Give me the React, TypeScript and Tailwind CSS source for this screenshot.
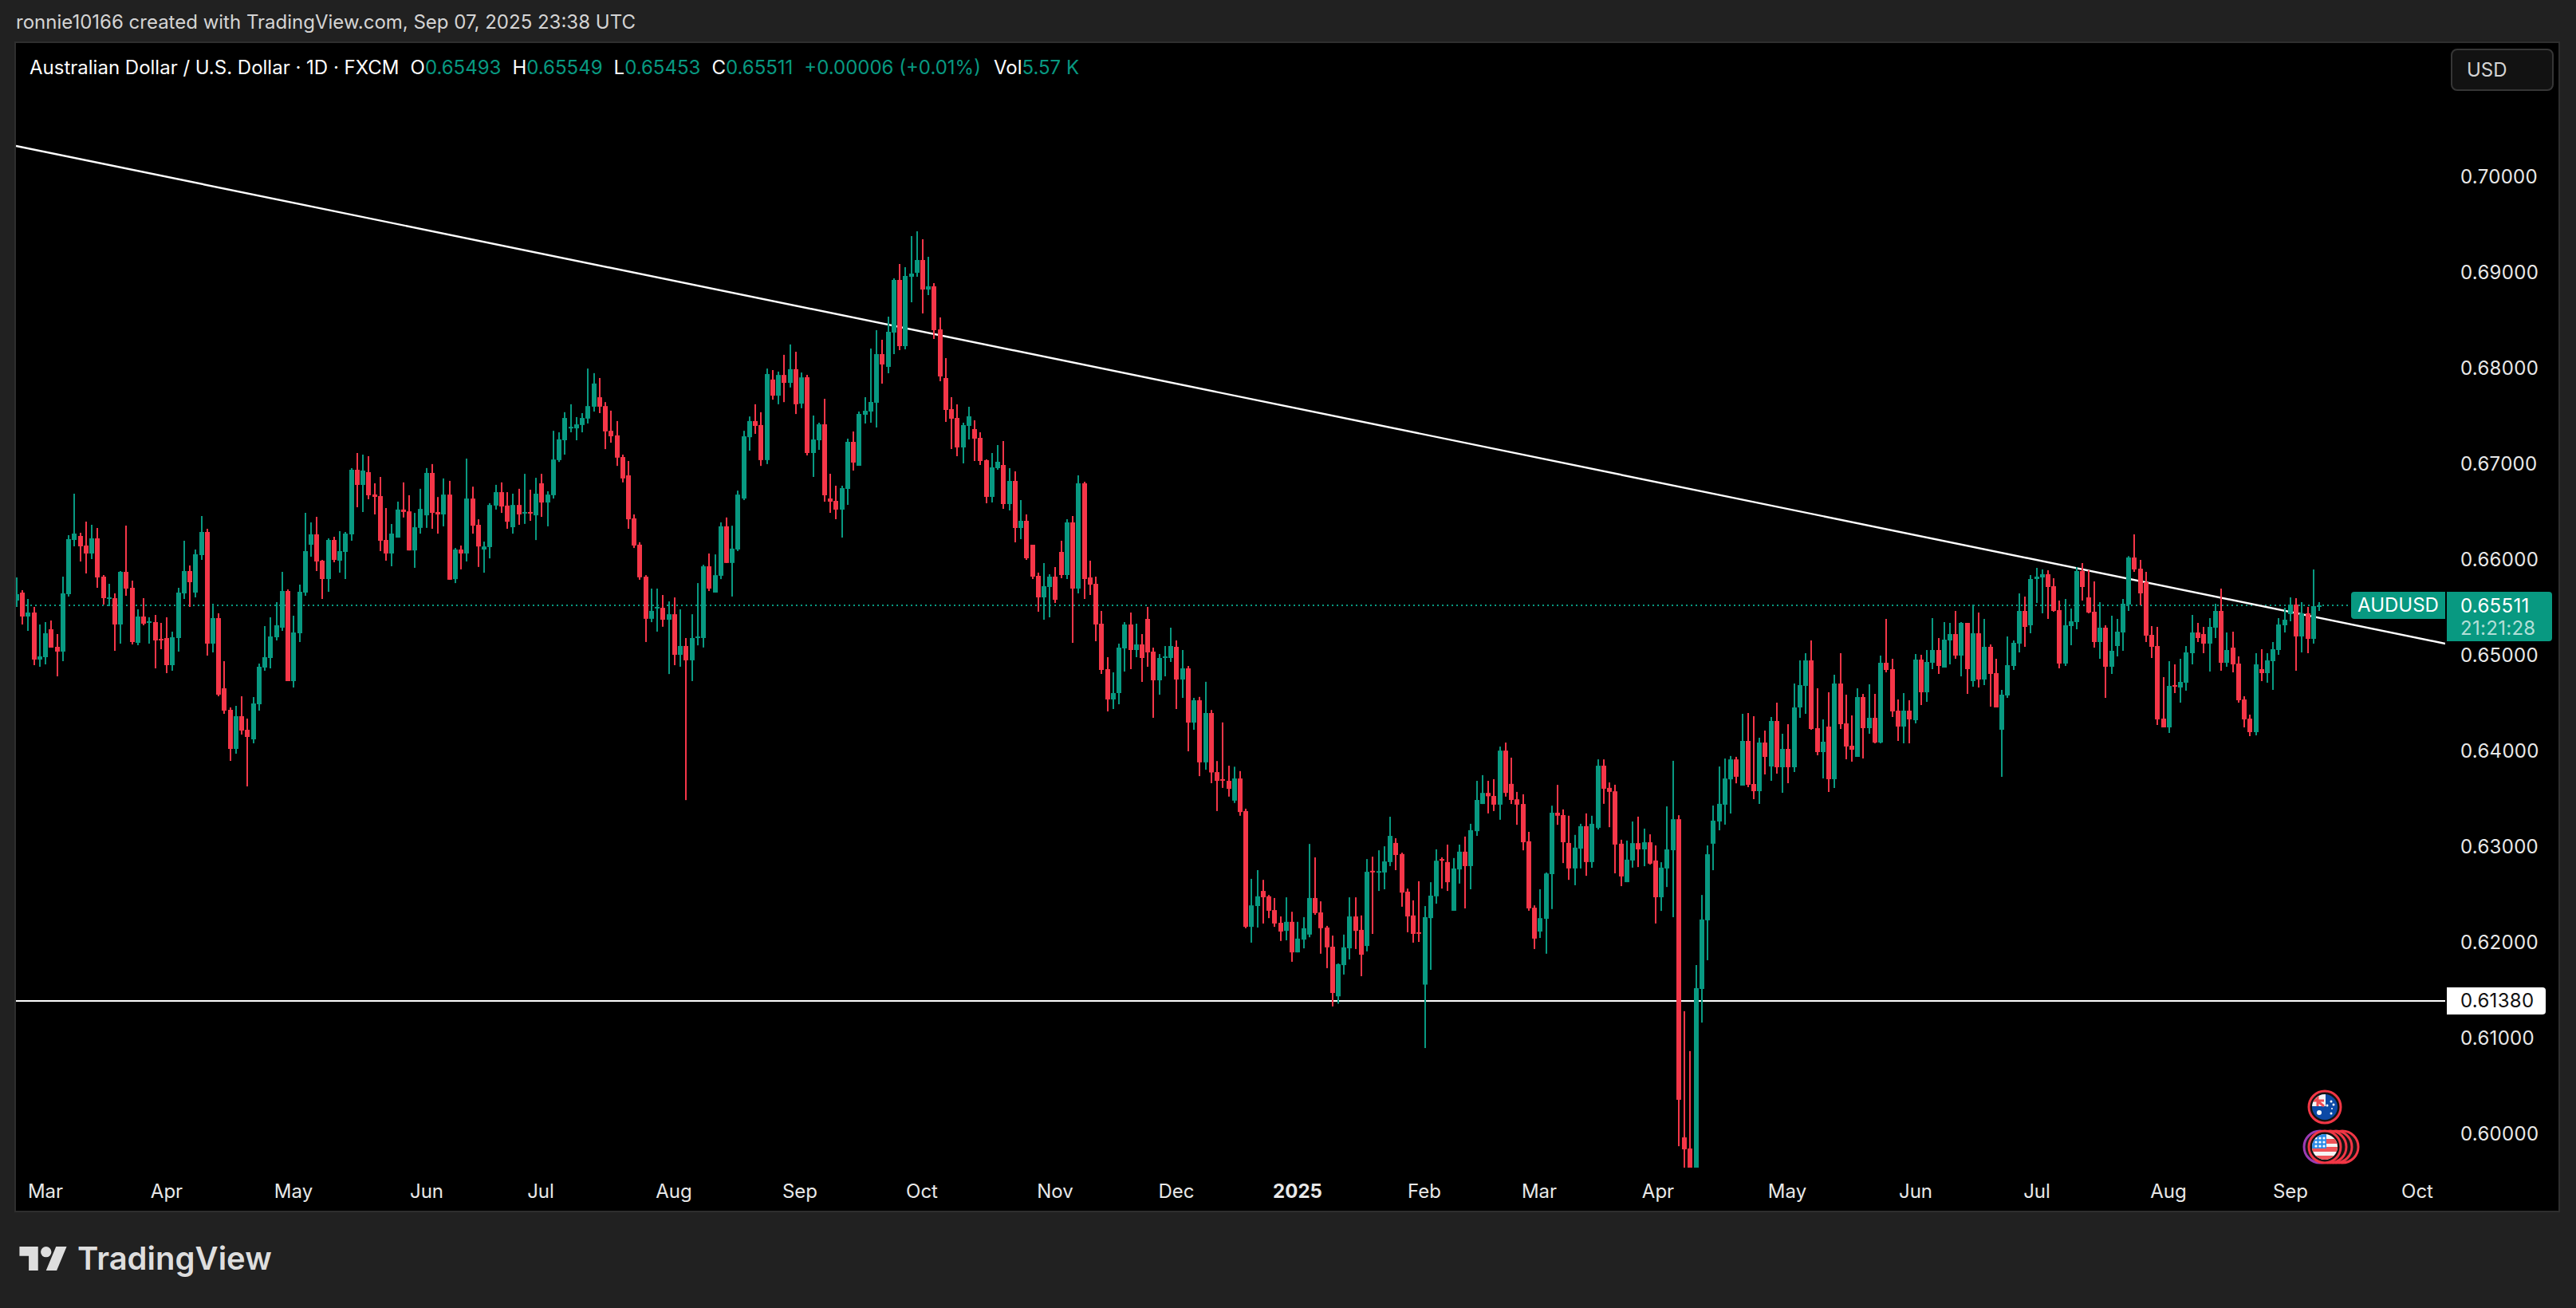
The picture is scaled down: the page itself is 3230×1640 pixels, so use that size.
const G = "#089981";
const R = "#f53648";

type C = [number, string, number, number, number, number];
type Seg = { ox: number; oy: number; sx: number; sy: number; c: C[] };

const segs: Seg[] = [
  { ox: 0, oy: 580, sx: 3, sy: 3, c: [
    [63,"g",432,495,519,543],[84,"r",480,489,579,609],[105,"g",513,564,579,633],[129,"r",543,564,741,762],[150,"g",609,729,741,768],[171,"g",600,642,732,759],[192,"r",594,627,696,696],[216,"r",645,693,711,804],[237,"g",429,492,711,747],[258,"g",273,288,495,504],[279,"g",117,267,291,315],[303,"r",264,276,315,372],[324,"r",222,312,342,417],[345,"g",234,285,342,363],[366,"r",246,285,432,471],[390,"r",423,429,510,534],[411,"g",456,507,513,540],[432,"r",492,510,609,708],[453,"g",408,411,609,681],[474,"r",237,411,474,501],[498,"r",444,471,675,684],[519,"g",552,579,678,687],[540,"r",510,579,606,612],[561,"g",582,597,603,681],[585,"r",573,600,669,774],[606,"r",603,663,669,702],[627,"r",582,660,762,792],[648,"g",636,657,762,783],[672,"g",471,489,660,711],[693,"g",294,408,492,513],[714,"r",387,408,450,543],[735,"g",327,345,489,507],[759,"g",201,261,348,366],[780,"r",249,261,681,726],[801,"g",531,585,681,714],[822,"r",567,585,873,879],[843,"r",747,849,933,945],[867,"r",921,930,1077,1122],[888,"g",915,954,1077,1095],[909,"r",879,954,1008,1023],[930,"r",963,1005,1032,1218],[954,"g",882,906,1041,1056],[975,"g",756,768,909,933],[996,"g",615,732,771,783],[1017,"g",582,654,735,774],[1041,"g",525,612,657,669],[1062,"g",411,483,621,633],[1083,"r",477,483,822,822],[1104,"g",576,639,822,846],[1128,"g",459,486,642,675],[1149,"g",189,333,489,501],[1170,"g",225,270,309,354],[1191,"r",204,270,372,408],[1212,"r",366,369,438,513],[1236,"g",285,291,438,486],[1257,"r",279,291,366,375],[1278,"g",258,333,369,414],[1299,"g",261,267,336,438],[1323,"g",21,27,270,294],[1344,"r",-36,27,84,168],[1365,"g",-30,30,84,186],[1386,"r",-24,36,123,138],[1410,"r",78,120,129,195],[1431,"r",54,126,294,333],[1452,"r",171,291,342,369],[1473,"g",231,267,342,390],
  ]},
  { ox: 490, oy: 420, sx: 3, sy: 2.6133, c: [
    [27,"g",546,572,664,664],[48,"r",483,572,580,598],[69,"r",525,578,706,706],[90,"g",583,630,706,763],[111,"g",504,570,632,651],[135,"g",436,452,591,632],[156,"r",423,452,583,635],[177,"r",531,580,588,651],[198,"g",470,523,588,627],[222,"r",478,523,802,802],[243,"g",698,703,800,813],[264,"r",690,703,716,768],[285,"g",405,536,716,742],[309,"r",497,536,625,651],[330,"r",604,622,693,760],[351,"g",677,693,703,779],[372,"g",551,557,695,732],[396,"g",491,515,559,572],[417,"r",483,515,562,583],[438,"r",515,559,612,635],[459,"g",520,557,630,651],[483,"r",504,557,588,622],[504,"g",455,580,584,619],[525,"r",507,580,584,609],[546,"g",468,520,591,672],[567,"r",455,486,549,596],[591,"g",512,523,549,627],[612,"g",314,408,525,536],[633,"g",319,342,410,416],[654,"g",253,272,345,392],[678,"g",227,301,305,319],[699,"g",269,293,306,345],[720,"g",256,272,295,319],[741,"g",110,233,274,290],[765,"g",125,159,235,251],[786,"r",141,204,235,256],[807,"r",220,233,316,374],[828,"r",248,314,332,353],[852,"r",282,329,402,429],[873,"r",392,400,470,483],[894,"r",413,460,604,635],[915,"r",588,601,690,698],[936,"r",679,687,794,802],[960,"r",787,792,930,1006],[981,"g",831,904,930,941],[1002,"g",831,891,895,972],[1023,"r",852,894,933,956],[1047,"g",873,915,933,1111],[1068,"r",860,915,1048,1082],[1089,"g",899,1019,1048,1087],[1110,"r",993,1019,1066,1524],[1134,"g",915,993,1066,1134],[1155,"g",813,988,992,1017],[1176,"g",753,758,993,1024],[1197,"r",716,758,831,839],[1221,"g",719,787,844,844],[1242,"g",614,627,789,800],[1263,"r",598,627,747,747],[1284,"g",625,700,747,857],[1305,"g",510,523,703,708],[1329,"g",314,332,536,541],[1350,"g",267,282,335,379],[1371,"r",227,282,298,324],[1392,"r",253,295,410,429],[1416,"g",110,128,410,423],[1437,"r",115,146,199,212],[1458,"g",120,131,199,227],[1479,"r",65,131,157,220],[1503,"g",31,112,157,172],[1524,"r",55,112,227,259],[1545,"g",123,139,225,240],
  ]},
  { ox: 1000, oy: 260, sx: 3, sy: 3, c: [
    [36,"r",630,639,924,933],[60,"g",783,873,924,1014],[81,"g",810,816,876,912],[102,"r",720,816,1083,1107],[123,"r",1002,1095,1107,1149],[144,"r",1047,1104,1137,1173],[168,"g",1047,1056,1137,1242],[189,"g",870,882,1059,1119],[210,"r",843,882,960,990],[231,"g",768,777,972,972],[255,"g",714,765,780,813],[276,"g",531,732,768,810],[297,"g",462,552,735,828],[318,"r",498,552,591,663],[342,"g",411,468,600,624],[363,"g",267,273,471,552],[384,"r",213,273,522,537],[405,"g",225,258,522,534],[429,"g",108,249,261,357],[450,"g",90,198,246,261],[471,"r",120,198,309,399],[492,"g",186,297,309,330],[513,"r",285,297,462,495],[537,"r",414,459,636,654],[558,"r",567,642,762,807],[579,"r",714,759,795,909],[600,"r",741,792,903,936],[624,"g",810,819,903,963],[645,"g",750,786,822,873],[666,"r",801,834,870,954],[687,"r",846,867,954,969],[711,"r",948,951,1089,1113],[732,"g",924,978,1089,1110],[753,"g",894,957,981,987],[774,"r",879,969,1116,1134],[798,"g",981,1029,1116,1140],[819,"r",993,1029,1206,1260],
  ]},
  { ox: 1280, oy: 590, sx: 3, sy: 3, c: [
    [0,"g",111,189,216,258],[21,"r",165,189,330,336],[45,"r",279,279,399,408],[66,"r",384,396,477,531],[87,"g",348,435,477,561],[108,"g",390,399,438,552],[129,"r",363,399,486,498],[153,"r",264,306,393,405],[174,"g",183,195,393,408],[195,"r",171,195,444,648],[216,"g",18,48,444,462],[240,"r",42,48,408,483],[261,"r",339,402,429,468],[282,"r",399,426,579,642],[303,"r",528,576,750,765],[327,"r",702,747,861,906],[348,"g",759,837,861,897],[369,"g",651,666,837,879],[390,"g",570,579,669,756],[414,"r",534,579,675,747],[435,"g",576,654,675,702],[456,"r",615,654,705,795],[477,"r",513,558,684,738],[498,"r",666,681,789,930],[522,"g",690,705,789,843],[543,"g",660,699,705,774],[564,"g",591,660,705,720],[585,"r",639,663,786,897],[609,"g",675,744,786,855],[630,"r",735,744,948,1056],[651,"g",855,864,948,975],
  ]},
  { ox: 1490, oy: 580, sx: 3, sy: 2.3758, c: [
    [42,"r",698,708,893,934],[66,"g",653,746,893,915],[87,"r",737,746,923,955],[108,"r",889,922,948,1038],[129,"r",774,943,947,969],[153,"r",903,948,972,995],[174,"g",906,941,1007,1014],[195,"r",919,941,1041,1052],[216,"r",1031,1038,1383,1387],[237,"g",1240,1319,1383,1430],[261,"g",1214,1292,1321,1385],[282,"r",1243,1276,1295,1373],[303,"r",1288,1292,1335,1357],[324,"r",1297,1333,1373,1383],[348,"r",1352,1371,1397,1425],[369,"g",1295,1368,1395,1423],[390,"r",1338,1368,1459,1487],[411,"g",1368,1418,1459,1459],[435,"g",1354,1387,1421,1447],[456,"g",1136,1297,1406,1414],[477,"r",1176,1297,1342,1347],[498,"r",1307,1340,1387,1463],[522,"r",1380,1385,1444,1506],[543,"r",1409,1442,1580,1620],[564,"g",1492,1494,1590,1612],[585,"g",1406,1444,1497,1525],[606,"g",1295,1352,1447,1480],[630,"r",1295,1352,1395,1449],[651,"r",1349,1392,1466,1530],[672,"g",1181,1219,1440,1456],[693,"r",1174,1216,1220,1404],[717,"g",1155,1217,1220,1276],[738,"g",1143,1188,1221,1271],[759,"g",1055,1112,1190,1202],[780,"r",1119,1133,1169,1214],[804,"r",1162,1166,1281,1323],[825,"r",1269,1278,1352,1399],[846,"r",1304,1349,1404,1430],[867,"r",1247,1399,1403,1428],[891,"g",1321,1354,1555,1744],[912,"g",1250,1290,1357,1511],[933,"g",1152,1186,1292,1314],[954,"r",1176,1181,1186,1269],[975,"r",1138,1190,1250,1276],[999,"g",1178,1209,1335,1335],[1020,"g",1138,1159,1212,1254],[1041,"r",1114,1159,1202,1328],[1062,"g",1076,1095,1202,1271],[1086,"g",948,1005,1098,1112],[1107,"g",931,984,1017,1017],[1128,"r",948,984,994,1045],[1149,"r",943,993,1019,1038],[1173,"g",846,858,1019,1064],[1194,"r",834,858,984,995],[1215,"r",879,957,1005,1017],[1236,"r",981,1003,1019,1079],[1260,"r",988,1017,1131,1155],[1281,"r",1100,1128,1328,1335],[1302,"r",1319,1326,1418,1449],[1323,"g",1271,1357,1397,1416],[1347,"g",1221,1224,1359,1463],[1368,"g",1022,1043,1226,1330],[1389,"r",960,1043,1052,1079],[1410,"r",1033,1050,1131,1193],[1431,"r",1052,1133,1209,1243],[1455,"g",1109,1147,1209,1259],[1476,"g",1076,1083,1150,1209],[1497,"r",1045,1083,1190,1231],[1518,"g",1052,1076,1190,1207],[1542,"g",884,903,1088,1093],
  ]},
  { ox: 2000, oy: 920, sx: 3, sy: 2.8, c: [
    [33,"r",90,112,193,246],[54,"r",171,190,204,328],[75,"r",179,202,389,490],[99,"r",372,386,501,535],[120,"g",375,442,521,521],[141,"g",308,384,445,470],[162,"r",291,384,406,468],[186,"g",333,381,406,465],[207,"r",353,381,456,459],[228,"r",392,445,574,666],[249,"g",451,470,574,622],[270,"g",255,406,473,538],[294,"g",95,300,409,644],[315,"r",286,300,1285,1448],[336,"r",974,1417,1459,1530],[357,"r",1114,1456,1530,1530],[381,"g",812,893,1530,1530],[402,"g",566,652,896,1014],[423,"g",392,423,655,795],[444,"g",252,305,386,479],[468,"g",115,246,308,339],[489,"g",87,157,249,319],[510,"g",78,90,160,280],[531,"r",81,90,151,174],
  ]},
  { ox: 2120, oy: 680, sx: 3, sy: 3, c: [
    [195,"g",645,747,915,915],[216,"r",642,747,912,921],[237,"r",654,909,936,966],[258,"g",735,753,936,984],[279,"r",708,753,807,873],[303,"g",657,672,843,897],[324,"r",603,672,846,870],[345,"g",720,777,846,942],[366,"r",684,777,846,906],[390,"g",531,621,846,864],[411,"g",444,537,621,660],[432,"g",417,444,540,645],[453,"r",369,444,702,705],[477,"r",549,699,789,801],[498,"g",666,750,789,888],[519,"r",564,693,891,939],[540,"g",498,531,891,924],[564,"r",417,531,684,702],[585,"r",573,681,768,816],[606,"r",651,765,780,825],[627,"g",549,582,807,807],[648,"r",570,582,699,813],[672,"g",534,660,699,720],[693,"r",570,660,753,756],[714,"g",426,453,753,756],[735,"r",288,453,480,489],[759,"r",438,477,636,657],[780,"r",591,633,693,747],[801,"g",567,633,693,756],[822,"r",594,633,666,756],[846,"g",420,441,669,681],[867,"r",423,441,564,612],[888,"g",405,450,564,600],[909,"g",285,405,453,477],[933,"r",360,405,465,495],[954,"g",300,366,471,471],[975,"g",303,345,369,459],[996,"r",258,345,426,438],[1017,"g",300,303,426,504],[1041,"r",303,303,477,570],[1062,"g",234,342,522,543],[1083,"r",264,342,516,546],[1104,"g",288,393,516,537],[1128,"r",384,393,495,618],[1149,"r",438,492,621,621],[1170,"g",555,573,705,882],[1191,"g",354,462,576,585],[1215,"g",369,378,465,480],[1236,"g",192,258,381,414],[1257,"r",204,258,318,393],[1278,"g",123,138,312,342],[1302,"g",96,129,138,228],[1323,"g",102,120,132,267],[1344,"r",105,120,168,288],[1365,"r",135,165,258,261],[1386,"r",219,255,456,474],[1410,"g",213,312,456,465],[1431,"g",249,297,315,387],[1452,"g",93,108,300,327],[1473,"r",78,108,168,219],[1497,"r",105,207,264,267],[1518,"r",147,261,375,396],[1539,"g",225,321,375,438],[1560,"r",312,321,468,585],
  ]},
  { ox: 2600, oy: 660, sx: 2.489, sy: 3, c: [
    [119,"g",336,468,528,555],[136,"g",348,396,450,489],[154,"g",273,291,399,468],[172,"g",112,117,294,318],[190,"r",30,117,162,171],[209,"r",126,159,252,297],[227,"r",171,210,411,435],[244,"r",375,408,453,495],[262,"r",378,450,726,747],[281,"r",567,723,756,756],[298,"g",507,600,756,777],[316,"r",519,597,603,627],[333,"g",498,585,606,663],[352,"g",450,474,588,618],[370,"g",333,399,477,519],[388,"r",363,399,420,435],[405,"r",378,405,441,477],[425,"g",345,378,441,546],[443,"g",291,318,381,420],[460,"r",234,318,513,543],[477,"g",399,465,513,528],[497,"r",396,456,519,549],[516,"r",489,516,654,663],[533,"r",639,651,726,756],[550,"r",708,723,774,789],[569,"g",477,519,774,786],[587,"r",462,537,552,582],[605,"g",477,504,552,588],[622,"g",435,462,507,615],[640,"g",345,369,465,483],[659,"g",306,351,372,399],[677,"g",267,294,330,357],[694,"r",270,294,414,543],[712,"g",285,327,414,474],[732,"r",303,327,423,477],[749,"g",162,300,423,441],[766,"g",285,297,303,318],
  ]},
];

const candles = segs.flatMap((s) =>
  s.c.map(([cx, col, wt, bt, bb, wb]) => ({
    x: Math.round(s.ox + cx / s.sx),
    col: col === "g" ? G : R,
    wt: s.oy + wt / s.sy,
    bt: s.oy + bt / s.sy,
    bb: s.oy + bb / s.sy,
    wb: s.oy + wb / s.sy,
  }))
);

const prices = ["0.70000","0.69000","0.68000","0.67000","0.66000","0.65000","0.64000","0.63000","0.62000","0.61000","0.60000"];

const times: [string, number, boolean?][] = [
  ["Mar",57],["Apr",209],["May",368],["Jun",535],["Jul",678],["Aug",845],["Sep",1003],["Oct",1156],["Nov",1323],["Dec",1475],["2025",1627,true],["Feb",1786],["Mar",1930],["Apr",2079],["May",2241],["Jun",2402],["Jul",2554],["Aug",2719],["Sep",2872],["Oct",3031],
];

function Ring({ cx, cy, stroke }: { cx: number; cy: number; stroke: string }) {
  return <circle cx={cx} cy={cy} r={20} fill="#131313" stroke={stroke} strokeWidth={3} />;
}

function Chart() {
  return (
    <svg className="absolute inset-0 block" width={3188} height={1464} viewBox="20 54 3188 1464">
      <defs>
        <clipPath id="pane"><rect x={20} y={54} width={3046} height={1410} /></clipPath>
        <clipPath id="au"><circle cx={2915} cy={1388} r={16} /></clipPath>
        <clipPath id="us"><circle cx={2915} cy={1438} r={16} /></clipPath>
      </defs>
      <g clipPath="url(#pane)">
        <line x1={20} y1={759} x2={2944} y2={759} stroke={G} strokeWidth={2} strokeDasharray="2 4" />
        <line x1={20} y1={183} x2={3066} y2={807} stroke="#ffffff" strokeWidth={2.4} />
        <line x1={20} y1={1255} x2={3066} y2={1255} stroke="#ffffff" strokeWidth={2} />
        {candles.map((c, i) => (
          <g key={i} fill={c.col}>
            <rect x={c.x - 1} y={c.wt} width={2} height={Math.max(c.wb - c.wt, 1)} />
            <rect x={c.x - 3} y={c.bt} width={6} height={Math.max(c.bb - c.bt, 2)} />
          </g>
        ))}
      </g>
      <Ring cx={2909} cy={1438} stroke="#9c3bb5" />
      <Ring cx={2937} cy={1438} stroke="#f23645" />
      <Ring cx={2929} cy={1438} stroke="#f23645" />
      <Ring cx={2922} cy={1438} stroke="#f23645" />
      <Ring cx={2915} cy={1438} stroke="#f23645" />
      <circle cx={2915} cy={1388} r={20} fill="#131313" stroke="#f23645" strokeWidth={3} />
      <g clipPath="url(#au)">
        <rect x={2899} y={1372} width={32} height={32} fill="#0b49a6" />
        <rect x={2899} y={1372} width={17} height={15} fill="#f5f5f5" />
        <path d="M2899 1375 L2914 1387 M2906 1372 V1387 M2899 1380 H2914" stroke="#ef4d55" strokeWidth={3} />
        <circle cx={2908} cy={1395} r={3} fill="#fff" />
        <circle cx={2923} cy={1381} r={1.5} fill="#fff" />
        <circle cx={2926} cy={1385} r={1.5} fill="#fff" />
        <circle cx={2918} cy={1386} r={1.5} fill="#fff" />
        <circle cx={2923} cy={1396} r={1.5} fill="#fff" />
        <circle cx={2924} cy={1390} r={1} fill="#fff" />
      </g>
      <g clipPath="url(#us)">
        <rect x={2899} y={1422} width={32} height={32} fill="#f5f5f5" />
        <rect x={2899} y={1428} width={32} height={6} fill="#ef5358" />
        <rect x={2899} y={1438} width={32} height={6} fill="#ef5358" />
        <rect x={2899} y={1449} width={32} height={6} fill="#ef5358" />
        <rect x={2899} y={1422} width={18} height={18} fill="#2f8ee8" />
        {[1427, 1432, 1437].map((y) =>
          [2904, 2909, 2914].map((x) => <circle key={`${x}-${y}`} cx={x} cy={y} r={1.6} fill="#fff" />)
        )}
      </g>
    </svg>
  );
}

export default function App() {
  return (
    <div className="w-[3230px] h-[1640px] bg-[#212121] flex flex-col font-['Inter',sans-serif] overflow-hidden">
      <div className="h-[52px] pl-5 pt-[4px] flex items-center text-[24px] text-[#d4d4d4] leading-none">
        ronnie10166 created with TradingView.com, Sep 07, 2025 23:38 UTC
      </div>
      <div className="relative ml-[18px] w-[3192px] h-[1468px] bg-black border-2 border-[#2e2e2e] overflow-hidden">
        <Chart />

        <div className="absolute left-[17px] top-[17px] h-7 flex items-center text-[24px] leading-none text-white whitespace-nowrap">
          <span>Australian Dollar / U.S. Dollar · 1D · FXCM</span>
          <span className="ml-[14px]">O<span className="text-[#089981]">0.65493</span></span>
          <span className="ml-[14px]">H<span className="text-[#089981]">0.65549</span></span>
          <span className="ml-[14px]">L<span className="text-[#089981]">0.65453</span></span>
          <span className="ml-[14px]">C<span className="text-[#089981]">0.65511</span></span>
          <span className="ml-[14px] text-[#089981]">+0.00006 (+0.01%)</span>
          <span className="ml-[16px]">Vol<span className="text-[#089981]">5.57 K</span></span>
        </div>

        <div className="absolute right-[6px] top-[7px] w-[129px] h-[53px] rounded-lg border-2 border-[#363636] bg-[#121212] flex items-center pl-[18px] text-[24px] text-[#d4d4d4]">
          USD
        </div>

        <div className="absolute left-[3065px] top-[108px] flex flex-col text-[24px] tracking-[0.3px] text-[#e8e8e8]">
          {prices.map((p) => (
            <div key={p} className="h-[120px] flex items-center">{p}</div>
          ))}
        </div>

        <div className="absolute left-[2928px] top-[688px] w-[118px] h-[34px] rounded-l bg-[#089981] flex items-center justify-center text-[24px] text-white">
          AUDUSD
        </div>
        <div className="absolute left-[3048px] top-[688px] w-[132px] h-[62px] rounded-r bg-[#089981] flex flex-col pl-[17px] pt-[2px] justify-center text-[24px] tracking-[0.3px] leading-[28px]">
          <span className="text-white">0.65511</span>
          <span className="text-white/70">21:21:28</span>
        </div>
        <div className="absolute left-[3048px] top-[1184px] w-[124px] h-[34px] rounded-r bg-white flex items-center pl-[17px] text-[24px] tracking-[0.3px] text-[#111111]">
          0.61380
        </div>

        <div className="absolute left-0 right-0 bottom-0 h-[54px] text-[24px] text-[#e8e8e8]">
          {times.map(([t, x, bold]) => (
            <span
              key={`${t}${x}`}
              className={bold ? "absolute top-[12px] -translate-x-1/2 font-bold" : "absolute top-[12px] -translate-x-1/2"}
              style={{ left: x - 20 }}
            >
              {t}
            </span>
          ))}
        </div>
      </div>
      <div className="flex-1 flex items-center pl-6 pb-[4px] gap-[13px]">
        <svg width={60} height={30} viewBox="0 7 35.5 18" fill="#dedede">
          <path d="M14 25H7V14H0V7h14v18zM28 25h-8l7.5-18h8L28 25z" />
          <circle cx={20} cy={11} r={4} />
        </svg>
        <span className="text-[40px] font-semibold leading-none text-[#dedede]">TradingView</span>
      </div>
    </div>
  );
}
